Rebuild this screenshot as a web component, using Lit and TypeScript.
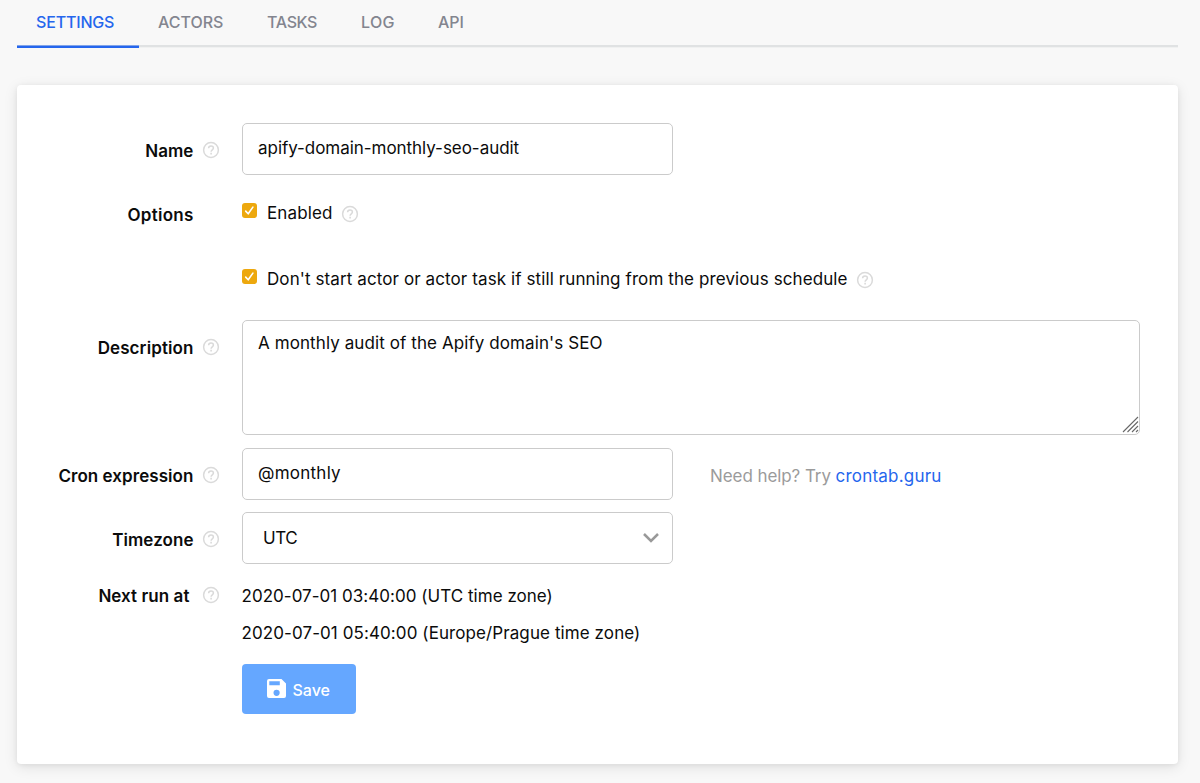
import { LitElement, html, css } from "lit";
import { customElement, property } from "lit/decorators.js";

@customElement("help-icon")
class HelpIcon extends LitElement {
  static styles = css`
    :host { display: block; width: 18px; height: 18px; flex: none; }
    svg { display: block; }
  `;
  render() {
    return html`<svg width="18" height="18" viewBox="0 0 18 18" fill="none" stroke="#dadada">
      <circle cx="9" cy="9" r="7.4" stroke-width="1.5" />
      <path d="M6.6 7.3C6.6 5.8 7.6 5 9 5s2.4.8 2.4 2.1c0 1.7-2.3 1.8-2.3 3.6" stroke-width="1.5" />
      <path d="M9.1 11.8v1.6" stroke-width="1.6" />
    </svg>`;
  }
}

@customElement("check-box")
class CheckBox extends LitElement {
  static styles = css`
    :host { display: block; width: 15px; height: 15px; flex: none; }
    svg { display: block; }
  `;
  render() {
    return html`<svg width="15" height="15" viewBox="0 0 15 15">
      <rect width="15" height="15" rx="3" fill="#eda80e" />
      <path d="M3.7 8.1l2.5 2.7 4.7-6.7" fill="none" stroke="#fff" stroke-width="1.6" stroke-linecap="round" stroke-linejoin="round" />
    </svg>`;
  }
}

@customElement("form-row")
class FormRow extends LitElement {
  @property() label = "";
  @property({ type: Boolean }) help = false;
  static styles = css`
    :host { display: grid; grid-template-columns: 203px 1fr; column-gap: 21.5px; align-items: start; }
    .label { display: flex; justify-content: flex-end; align-items: center; gap: 8.5px; height: 24px;
      padding-top: var(--label-top, 0px); font-weight: 600; font-size: 17px; line-height: 24px; white-space: nowrap; }
    .text { letter-spacing: var(--label-spacing, 0.06px); padding: 1px var(--label-pad, 0px) 0 0; }
    .blank { width: 18px; }
  `;
  render() {
    return html`
      <div class="label"><span class="text">${this.label}</span>${this.help ? html`<help-icon></help-icon>` : html`<span class="blank"></span>`}</div>
      <div><slot></slot></div>`;
  }
}

@customElement("app-root")
class AppRoot extends LitElement {
  static styles = css`
    :host { display: block; box-sizing: border-box; height: 783px; overflow: hidden; background: #f8f8f8; color: #0b0b0b;
      padding: 0 22px 0 17px; font: 400 17px/24px Inter, "Liberation Sans", sans-serif; }
    * { box-sizing: border-box; }
    .tabs { display: flex; height: 48px; box-shadow: inset 0 -1px #f0f1f1, inset 0 -3px #e0e2e3; }
    .tab { height: 48px; padding: 10px 25px 0 19px; font-size: 16px; line-height: 24px; font-weight: 500; color: #83858f; white-space: nowrap; }
    .active { color: #2566ed; box-shadow: inset 0 -2.5px #2566ed; }
    .t-settings { width: 122px; letter-spacing: -0.17px; }
    .t-actors { width: 109px; }
    .t-tasks { width: 94px; letter-spacing: -0.35px; }
    .t-log { width: 77px; letter-spacing: 0.3px; }
    .card { margin-top: 37px; height: 679px; background: #fff; border-radius: 4px; padding-top: 38px;
      box-shadow: 0 3px 14px rgba(0,0,0,.1), 0 1px 5px rgba(0,0,0,.06); }
    .box { border: 1.5px solid #cbcbcb; border-radius: 5px; width: 431px; height: 52px; padding: 0 15.5px 2px; display: flex; align-items: center; white-space: nowrap; }
    .area { width: 898.5px; height: 115px; padding: 10px 0 0 15.5px; align-items: flex-start; position: relative; }
    .grip { position: absolute; right: 0; bottom: 1px; display: block; }
    .select { justify-content: space-between; padding: 0 12px 0 20.5px; }
    .name { --label-top: 15px; height: 76px; }
    .options { --label-top: 3px; --label-spacing: 0.25px; height: 121px; }
    .desc { --label-top: 15px; --label-spacing: 0.1px; height: 128px; }
    .cron { --label-top: 15px; height: 64px; }
    .zone { --label-top: 15px; height: 71px; }
    .next { --label-top: 0px; --label-pad: 4px; height: 81px; }
    .option { display: flex; height: 24px; white-space: nowrap; margin-top: 2px; }
    .option + .option { margin-top: 42px; }
    .option span { margin: 0 8px 0 10px; }
    .option check-box { margin: 2px 0 0 0.5px; }
    .option help-icon { margin-top: 4px; }
    .line { height: 37px; padding-top: 1px; white-space: nowrap; }
    .pair { display: flex; align-items: center; gap: 37.5px; }
    .hint { color: #9b9b9b; padding-top: 3px; white-space: pre; }
    .link { color: #2566ed; letter-spacing: 0.2px; }
    .v-name { letter-spacing: -0.04px; }
    .v-enabled { letter-spacing: 0.14px; }
    .v-dont { letter-spacing: 0.1px; }
    .v-desc { letter-spacing: 0.09px; }
    .v-cron { letter-spacing: 0.25px; }
    .v-hint { letter-spacing: -0.08px; }
    .v-zone { letter-spacing: -0.4px; }
    .v-utc { letter-spacing: 0.03px; }
    .v-prague { letter-spacing: 0.09px; }
    .save { width: 114px; height: 50px; border: 0; border-radius: 4px; background: #65a7ff; color: #fff; font: 500 16px/24px Inter, sans-serif;
      display: flex; align-items: center; padding: 0 0 0 25px; gap: 7px; white-space: nowrap; }
    .save svg { flex: none; margin-top: -1px; }
    .save span { padding-top: 1px; }
  `;
  render() {
    return html`
      <nav class="tabs">
        <div class="tab active t-settings">SETTINGS</div>
        <div class="tab t-actors">ACTORS</div>
        <div class="tab t-tasks">TASKS</div>
        <div class="tab t-log">LOG</div>
        <div class="tab t-api">API</div>
      </nav>
      <main class="card">
        <form-row class="name" label="Name" help><div class="box"><span class="v-name">apify-domain-monthly-seo-audit</span></div></form-row>
        <form-row class="options" label="Options">
          <div class="option"><check-box></check-box><span class="v-enabled">Enabled</span><help-icon></help-icon></div>
          <div class="option"><check-box></check-box><span class="v-dont">Don't start actor or actor task if still running from the previous schedule</span><help-icon></help-icon></div>
        </form-row>
        <form-row class="desc" label="Description" help>
          <div class="box area"><span class="v-desc">A monthly audit of the Apify domain's SEO</span>
            <svg class="grip" width="17" height="17" viewBox="0 0 17 17" stroke="#686868" stroke-width="1.1"><path d="M1 16L16 1M5.5 16L16 5.5M10 16l6-6M14 16l2-2" /></svg>
          </div>
        </form-row>
        <form-row class="cron" label="Cron expression" help>
          <div class="pair"><div class="box"><span class="v-cron">@monthly</span></div>
            <div class="hint"><span class="v-hint">Need help? Try </span><span class="link">crontab.guru</span></div></div>
        </form-row>
        <form-row class="zone" label="Timezone" help>
          <div class="box select"><span class="v-zone">UTC</span>
            <svg width="18" height="12" viewBox="0 0 18 12" fill="none" stroke="#999" stroke-width="2.5"><path d="M2 2l7 7 7-7" /></svg></div>
        </form-row>
        <form-row class="next" label="Next run at" help>
          <div class="line v-utc">2020-07-01 03:40:00 (UTC time zone)</div>
          <div class="line v-prague">2020-07-01 05:40:00 (Europe/Prague time zone)</div>
        </form-row>
        <form-row><button class="save">
          <svg width="19" height="19" viewBox="0 0 19 19"><path fill="#fff" fill-rule="evenodd" d="M2 0h12.5L19 4.5V17a2 2 0 0 1-2 2H2a2 2 0 0 1-2-2V2a2 2 0 0 1 2-2zM2.3 2.2v4h10.5v-4zM6.5 13.8a3.1 3.1 0 1 0 6.2 0a3.1 3.1 0 1 0-6.2 0z" /></svg>
          <span>Save</span></button></form-row>
      </main>`;
  }
}
